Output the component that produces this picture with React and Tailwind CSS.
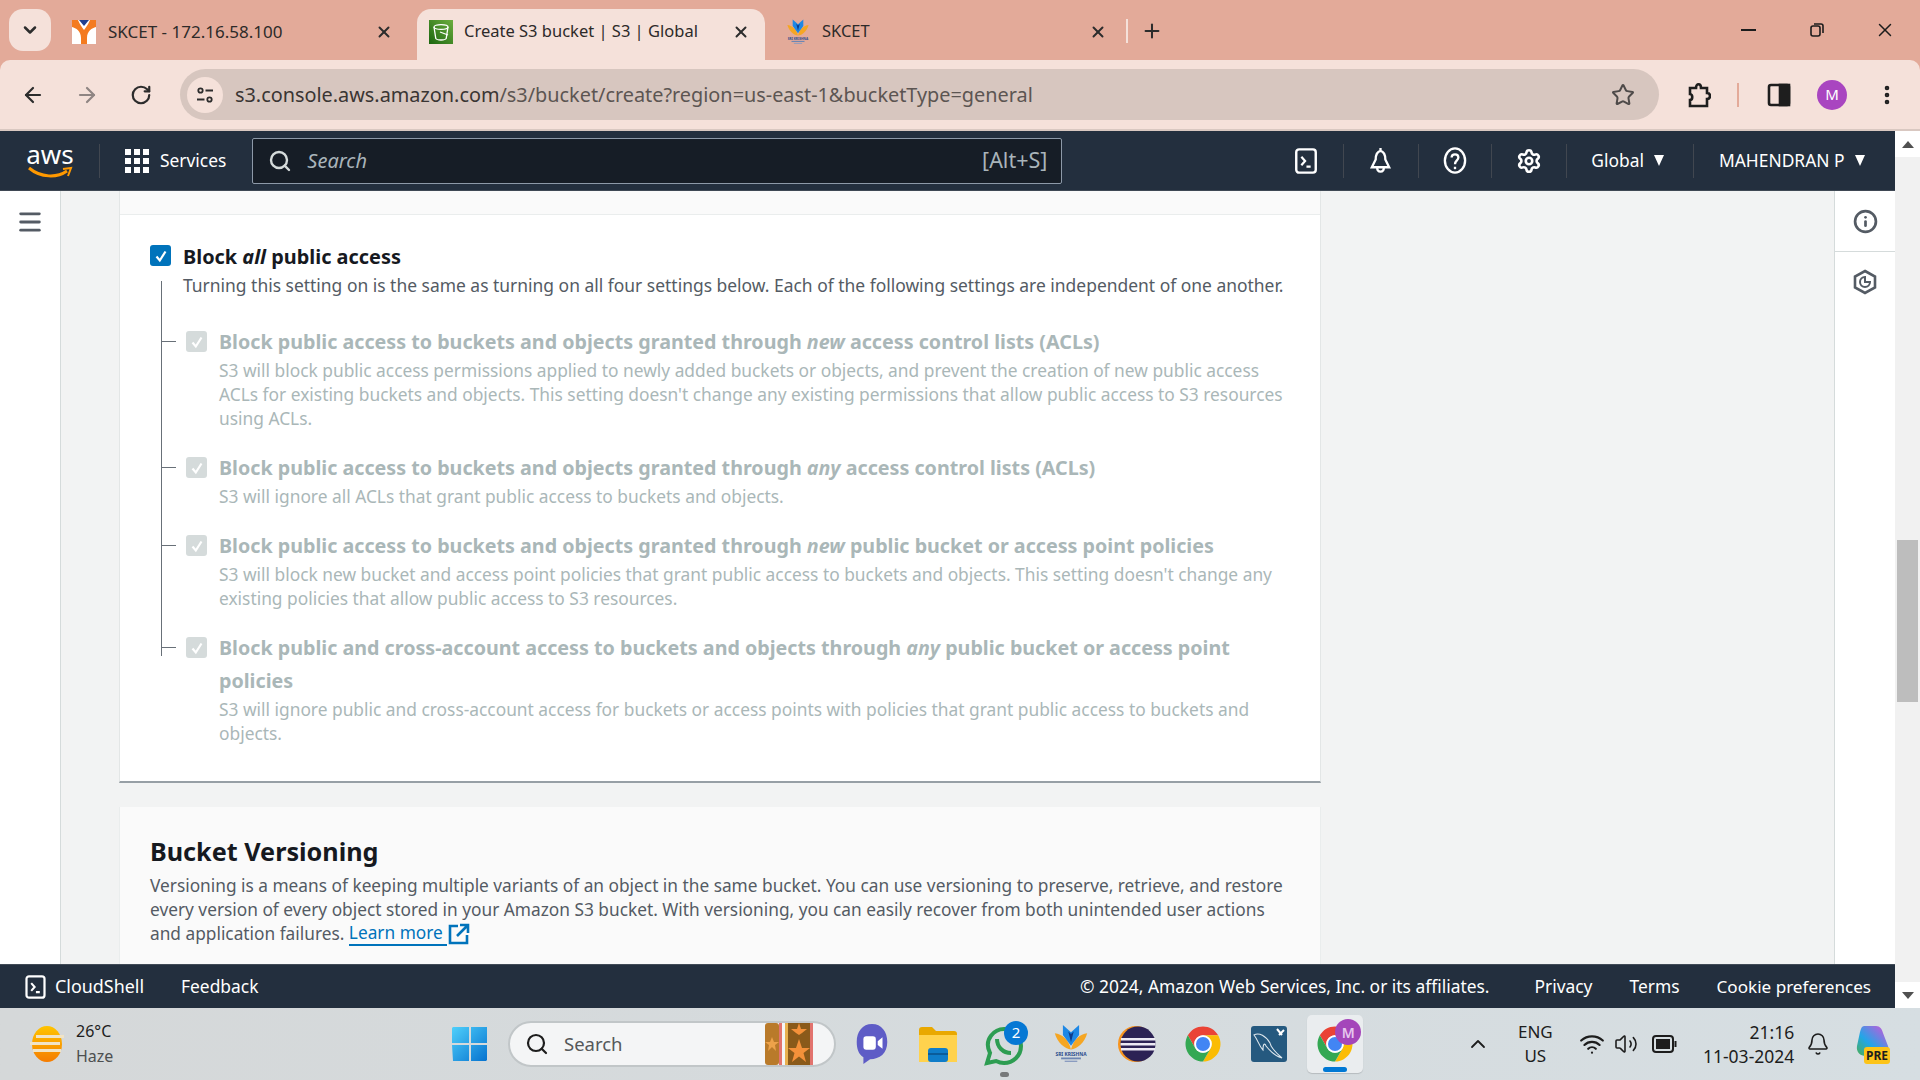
import React from "react";
import { ArrowLeft, ArrowRight, RotateCw, Star, Search, Bell, Settings, X, Plus, Menu, ChevronDown, ChevronUp, EllipsisVertical, Info, Wifi, Volume2 } from "lucide-react";

const ITEMS = [
    {
        title: ["Block public access to buckets and objects granted through ", "new", " access control lists (ACLs)"],
        desc: ["S3 will block public access permissions applied to newly added buckets or objects, and prevent the creation of new public access", "ACLs for existing buckets and objects. This setting doesn't change any existing permissions that allow public access to S3 resources", "using ACLs."],
    },
    {
        title: ["Block public access to buckets and objects granted through ", "any", " access control lists (ACLs)"],
        desc: ["S3 will ignore all ACLs that grant public access to buckets and objects."],
    },
    {
        title: ["Block public access to buckets and objects granted through ", "new", " public bucket or access point policies"],
        desc: ["S3 will block new bucket and access point policies that grant public access to buckets and objects. This setting doesn't change any", "existing policies that allow public access to S3 resources."],
    },
    {
        title: ["Block public and cross-account access to buckets and objects through ", "any", " public bucket or access point policies"],
        desc: ["S3 will ignore public and cross-account access for buckets or access points with policies that grant public access to buckets and", "objects."],
    },
];

const CheckBox = ({ disabled }) => (
    <div className={`flex h-[21px] w-[21px] shrink-0 items-center justify-center rounded-[3px] ${disabled ? "bg-[#d5dbdb]" : "bg-[#0073bb]"}`}>
        <svg viewBox="0 0 16 16" className="h-[16px] w-[16px]" fill="none" stroke="white" strokeWidth="2.2"><path d="M3.5 8.5 6.8 12.5 12.5 3.5" /></svg>
    </div>
);

const TerminalIcon = ({ className }) => (
    <svg viewBox="0 0 24 28" className={className} fill="none" stroke="white">
        <rect x="1.5" y="1.5" width="21" height="25" rx="3" strokeWidth="2.6" />
        <path d="M7 9.5 11 14 7 18.5M12.5 20H17" strokeWidth="2.4" />
    </svg>
);

const Caret = () => <div className="ml-[10px] h-0 w-0 border-x-[5px] border-t-[11px] border-x-transparent border-t-white" />;

const ChromeLogo = ({ className }) => (
    <svg viewBox="0 0 48 48" className={className}>
        <path fill="#ea4335" d="M24 14H41.32A20 20 0 0 0 6.68 14L15.34 29A10 10 0 0 1 24 14Z" />
        <path fill="#fbbc04" d="M41.32 14H24A10 10 0 0 1 32.66 29L24 44A20 20 0 0 0 41.32 14Z" />
        <path fill="#34a853" d="M6.68 14 15.34 29A10 10 0 0 0 32.66 29L24 44A20 20 0 0 1 6.68 14Z" />
        <circle cx="24" cy="24" r="10" fill="white" />
        <circle cx="24" cy="24" r="8" fill="#4285f4" />
    </svg>
);

const SkiLogo = ({ className, text }) => (
    <svg viewBox="0 0 40 44" className={className}>
        <path fill="#f5a623" d="M2 10C10 11 17 16 20 28 13 27 5 21 2 10Z" />
        <path fill="#f5a623" d="M38 10C30 11 23 16 20 28 27 27 35 21 38 10Z" />
        <path fill="#1e88e5" d="M11 1 20 9 29 1 29 12 20 24 11 12Z" />
        <path fill="#0d3c8c" d="M17 8 20 11 23 8 20 20Z" />
        {text && <text x="20" y="35" textAnchor="middle" fontSize="5.4" fontWeight="700" fill="#2a4b8d">SRI KRISHNA</text>}
        {text && <rect x="9" y="37" width="22" height="2" fill="#6d86b3" />}
        {text && <rect x="13" y="40.5" width="14" height="1.5" fill="#8a9cc0" />}
    </svg>
);

function TabStrip() {
    return (
        <div className="flex h-[60px] items-end bg-[#e3aa99] text-[16.5px] text-[#2d2a29]">
            <div className="mb-[9px] ml-[9px] flex h-[42px] w-[42px] items-center justify-center rounded-[14px] bg-[#f5e1da]">
                <ChevronDown size={20} strokeWidth={3} className="text-[#2c2c2c]" />
            </div>
            <div className="flex h-[51px] w-[366px] items-center pl-[21px] pb-[6px]">
                <svg viewBox="0 0 24 24" className="h-[24px] w-[24px] shrink-0">
                    <rect width="24" height="24" fill="white" />
                    <path fill="#f47b20" d="M0 0H6C8 5 10 7 12 10 14 7 16 5 18 0H24V7C20 8 15 11 15 18V24H9V18C9 11 4 8 0 7Z" />
                    <path fill="#1f3f8f" d="M7 0H17L12 6Z" />
                </svg>
                <span className="ml-[12px] w-[267px] text-[17px]">SKCET - 172.16.58.100</span>
                <X size={18} strokeWidth={2.6} className="text-[#2c2c2c]" />
            </div>
            <div className="flex h-[51px] w-[348px] items-center rounded-t-[14px] bg-[#f5e1da] pb-[6px] pl-[12px]">
                <svg viewBox="0 0 24 24" className="h-[24px] w-[24px] shrink-0">
                    <defs><linearGradient id="s3g" x1="0" y1="1" x2="1" y2="0"><stop offset="0" stopColor="#1b660f" /><stop offset="1" stopColor="#6cae3e" /></linearGradient></defs>
                    <rect width="24" height="24" fill="url(#s3g)" />
                    <g fill="none" stroke="white" strokeWidth="1.3"><ellipse cx="12" cy="7" rx="7" ry="2.4" /><path d="M5 7 6.8 18.5C8 20.5 16 20.5 17.2 18.5L19 7" /><path d="M11 12 19 15" /></g>
                </svg>
                <span className="ml-[11px] w-[268px]">Create S3 bucket | S3 | Global</span>
                <X size={18} strokeWidth={2.6} className="text-[#2c2c2c]" />
            </div>
            <div className="flex h-[51px] w-[361px] items-center pb-[6px] pl-[21px]">
                <SkiLogo className="h-[26px] w-[24px] shrink-0" text />
                <span className="ml-[12px] w-[267px]">SKCET</span>
                <X size={18} strokeWidth={2.6} className="text-[#2c2c2c]" />
            </div>
            <div className="mb-[17px] h-[24px] w-[2px] bg-[#f5e1da]" />
            <Plus size={22} strokeWidth={2.2} className="mb-[18px] ml-[13px] text-[#2c2c2c]" />
            <div className="mb-[19px] ml-auto flex items-center text-[#1c1c1c]">
                <div className="h-[2px] w-[15px] bg-[#1c1c1c]" />
                <svg viewBox="0 0 16 16" className="ml-[53px] h-[16px] w-[16px]" fill="none" stroke="#1c1c1c" strokeWidth="1.6"><rect x="2" y="4" width="9" height="10" rx="2" /><path d="M5 2H12C13.5 2 14 2.5 14 4V11" /></svg>
                <X size={22} strokeWidth={1.6} className="ml-[49px] mr-[24px]" />
            </div>
        </div>
    );
}

function Toolbar() {
    return (
        <div className="flex h-[71px] items-center rounded-t-[10px] border-b-[2px] border-[#d9c8c1] bg-[#f5e1da]">
            <ArrowLeft size={24} strokeWidth={2.2} className="ml-[21px] text-[#2c2c2c]" />
            <ArrowRight size={24} strokeWidth={2.2} className="ml-[30px] text-[#8f8583]" />
            <RotateCw size={22} strokeWidth={2.4} className="ml-[31px] text-[#2c2c2c]" />
            <div className="ml-[28px] flex h-[51px] w-[1479px] items-center rounded-full bg-[#d7c6bf] pl-[7px]">
                <div className="flex h-[36px] w-[36px] items-center justify-center rounded-full bg-[#f5e1da]">
                    <svg viewBox="0 0 20 20" className="h-[20px] w-[20px]" fill="none" stroke="#2c2c2c" strokeWidth="1.8"><circle cx="5.5" cy="5.5" r="2.2" /><path d="M10.5 5.5H18M2 14.5H9.5" /><circle cx="14.5" cy="14.5" r="2.2" /></svg>
                </div>
                <span className="ml-[12px] text-[19.85px] text-[#3a3533]">s3.console.aws.amazon.com<span className="text-[#5c5552]">/s3/bucket/create?region=us-east-1&amp;bucketType=general</span></span>
                <Star size={24} strokeWidth={2} className="ml-auto mr-[24px] text-[#4e4a49]" />
            </div>
            <svg viewBox="0 0 24 28" className="ml-[28px] h-[28px] w-[24px]" fill="none" stroke="#1e1e1e" strokeWidth="2.6"><path d="M3 7H9C9 2 14 2 14 7H20V12C24 12 24 18 20 18V25H3V19C6 19 6 13 3 13Z" /></svg>
            <div className="ml-[26px] h-[24px] w-[2px] bg-[#e3aa99]" />
            <svg viewBox="0 0 24 24" className="ml-[28px] h-[24px] w-[24px]" fill="none" stroke="#1e1e1e" strokeWidth="2.6"><rect x="2" y="2" width="20" height="20" rx="2" /><rect x="13" y="2" width="9" height="20" fill="#1e1e1e" /></svg>
            <div className="ml-[26px] flex h-[30px] w-[30px] items-center justify-center rounded-full bg-[#a945c0] text-[15px] text-white">M</div>
            <EllipsisVertical size={24} strokeWidth={2.6} className="ml-[28px] text-[#1e1e1e]" />
        </div>
    );
}

function NavBar() {
    const Sep = () => <div className="h-[34px] w-px bg-[#414750]" />;
    return (
        <div className="flex h-[60px] shrink-0 items-center border-b border-[#3f4854] bg-[#232f3e] text-[17.4px] text-white">
            <div className="ml-[27px] flex h-[38px] w-[46px] flex-col items-center">
                <span className="text-[26px] leading-[24px]">aws</span>
                <svg viewBox="0 0 46 14" className="h-[14px] w-[46px]" fill="none" stroke="#ff9900" strokeWidth="3"><path d="M2 2C14 12 30 12 40 5" /><path d="M36 3 44 2 41 10" strokeWidth="2" /></svg>
            </div>
            <div className="ml-[26px]"><Sep /></div>
            <div className="ml-[25px] grid grid-cols-3 gap-[3px]">
                {Array.from({ length: 9 }).map((_, i) => <div key={i} className="h-[6px] w-[6px] bg-white" />)}
            </div>
            <span className="ml-[11px]">Services</span>
            <div className="ml-[26px] flex h-[46px] w-[810px] items-center rounded-[2px] border border-[#8d99a8] bg-[#161d26] pr-[14px] pl-[15px] text-[#a9b4ba]">
                <Search size={24} strokeWidth={2.4} className="mt-[1px] text-[#d5dbdb]" />
                <span className="ml-[15px] text-[20px] italic">Search</span>
                <span className="ml-auto text-[21.5px]">[Alt+S]</span>
            </div>
            <TerminalIcon className="ml-[232px] h-[26px] w-[24px]" />
            <div className="ml-[25px]"><Sep /></div>
            <svg viewBox="0 0 24 28" className="ml-[24px] h-[27px] w-[25px]" fill="none" stroke="white" strokeWidth="2.4"><path d="M12 1V4C8 5 7 9 7 13L3 21H21L17 13C17 9 16 5 12 4M8.500 21C8.500 27 15.500 27 15.500 21" /></svg>
            <div className="ml-[25px]"><Sep /></div>
            <svg viewBox="0 0 24 28" className="ml-[24px] h-[27px] w-[24px]" fill="none" stroke="white" strokeWidth="2.4"><ellipse cx="12" cy="14" rx="10.5" ry="12.5" /><path d="M8.5 11C8.5 6.5 15.5 6.5 15.5 11 15.5 14 12 14 12 18" /><path d="M12 20.5V23" /></svg>
            <div className="ml-[24px]"><Sep /></div>
            <Settings size={26} strokeWidth={2.4} className="ml-[24px]" />
            <div className="ml-[24px]"><Sep /></div>
            <span className="ml-[24px]">Global</span>
            <Caret />
            <div className="ml-[29px]"><Sep /></div>
            <span className="ml-[25px]">MAHENDRAN P</span>
            <Caret />
        </div>
    );
}

const Row = ({ item }) => (
    <div className="relative mb-[22px] flex gap-[12px] pl-[36px]">
        <div className="absolute top-[15px] left-[11px] h-px w-[15px] bg-[#687078]" />
        <div className="pt-[5px]"><CheckBox disabled /></div>
        <div className="text-[#aab7b8]">
            <div className="-mt-[1px] w-[1040px] text-[19.7px] leading-[33px] font-bold">{item.title[0]}<i>{item.title[1]}</i>{item.title[2]}</div>
            {item.desc.map((line, i) => <div key={i} className="text-[17.35px] leading-[24px]">{line}</div>)}
        </div>
    </div>
);

function Content() {
    return (
        <div className="flex min-h-0 flex-1 overflow-hidden bg-[#f2f3f3]">
            <div className="flex w-[61px] shrink-0 justify-center border-r border-[#d5dbdb] bg-white pt-[17px]">
                <Menu size={28} strokeWidth={2.4} className="text-[#545b64]" />
            </div>
            <div className="ml-[58px] w-[1202px] shrink-0">
                <div className="border-x border-b-[2px] border-x-[#e3e6e6] border-b-[#979fa5] bg-white pb-[14px]">
                    <div className="h-[24px] border-b border-[#eaeded] bg-[#fafafa]" />
                    <div className="pt-[30px] pl-[30px]">
                        <div className="flex gap-[12px] text-[19.9px] leading-[24px] font-bold text-[#16191f]">
                            <CheckBox />
                            <span>Block <i>all</i> public access</span>
                        </div>
                        <div className="mt-[4px] pl-[33px] text-[17.45px] leading-[24px] text-[#545b64]">Turning this setting on is the same as turning on all four settings below. Each of the following settings are independent of one another.</div>
                        <div className="relative mt-[29px]">
                            <div className="absolute -top-[45px] left-[11px] h-[375px] w-px bg-[#687078]" />
                            {ITEMS.map((item, i) => <Row key={i} item={item} />)}
                        </div>
                    </div>
                </div>
                <div className="mt-[24px] border-x border-[#eaeded] bg-[#fafafa] px-[30px] pt-[27px] pb-[40px]">
                    <div className="text-[25.2px] leading-[34px] font-bold text-[#16191f]">Bucket Versioning</div>
                    <div className="mt-[6px] text-[17.3px] leading-[24px] text-[#545b64]">
                        <div>Versioning is a means of keeping multiple variants of an object in the same bucket. You can use versioning to preserve, retrieve, and restore</div>
                        <div>every version of every object stored in your Amazon S3 bucket. With versioning, you can easily recover from both unintended user actions</div>
                        <div className="flex items-center">and application failures.&nbsp;
                            <span className="border-b-[2px] border-[#0073bb] pr-[4px] leading-[22px] text-[#0073bb]">Learn more</span>
                            <svg viewBox="0 0 22 22" className="ml-[1px] h-[22px] w-[22px]" fill="none" stroke="#0073bb" strokeWidth="2.6"><path d="M10 3H2V20H19V12" /><path d="M9 13 19 3M12 2H20V10" /></svg>
                        </div>
                    </div>
                </div>
            </div>
            <div className="ml-auto flex w-[61px] shrink-0 flex-col items-center border-l border-[#d5dbdb] bg-white">
                <div className="flex h-[61px] w-full items-center justify-center border-b border-[#d5dbdb]">
                    <Info size={25} strokeWidth={2.6} className="text-[#545b64]" />
                </div>
                <svg viewBox="0 0 24 26" className="mt-[17px] h-[26px] w-[24px]" fill="none" stroke="#545b64" strokeWidth="2.6"><path d="M12 2 22 7.5V18.5L12 24 2 18.5V7.5Z" /><path d="M12 8A5 5 0 1 0 17 13H12Z" strokeWidth="2" /></svg>
            </div>
        </div>
    );
}

function Footer() {
    return (
        <div className="flex h-[44px] shrink-0 items-center border-t border-[#414b57] bg-[#232f3e] text-[17.4px] text-white">
            <TerminalIcon className="ml-[24px] h-[24px] w-[23px]" />
            <span className="ml-[8px] text-[17.9px]">CloudShell</span>
            <span className="ml-[37px]">Feedback</span>
            <span className="ml-auto">© 2024, Amazon Web Services, Inc. or its affiliates.</span>
            <span className="ml-[45px]">Privacy</span>
            <span className="ml-[37px]">Terms</span>
            <span className="ml-[37px] mr-[24px] text-[17.1px]">Cookie preferences</span>
        </div>
    );
}

function ScrollBar() {
    return (
        <div className="flex w-[25px] shrink-0 flex-col items-center bg-[#f1f1f1]">
            <div className="flex h-[26px] w-full items-center justify-center bg-white"><div className="h-0 w-0 border-x-[6px] border-b-[7px] border-x-transparent border-b-[#505050]" /></div>
            <div className="mt-[383px] h-[162px] w-[21px] bg-[#bdbdbd]" />
            <div className="mt-auto flex h-[26px] w-full items-center justify-center bg-white"><div className="h-0 w-0 border-x-[6px] border-t-[7px] border-x-transparent border-t-[#505050]" /></div>
        </div>
    );
}

function TaskBar() {
    const Slot = ({ children, className = "" }) => <div className={`relative flex h-[72px] w-[66.2px] shrink-0 items-center justify-center ${className}`}>{children}</div>;
    return (
        <div className="flex h-[72px] items-center bg-[#d6dbdd] bg-gradient-to-r from-[#d5d8d9] to-[#d6dee2] text-[#1d1d1d]">
            <div className="flex w-[452px] shrink-0 items-center pl-[30px]">
                <svg viewBox="0 0 34 36" className="h-[36px] w-[34px]">
                    <defs><linearGradient id="sun" x1="0" y1="0" x2="0" y2="1"><stop offset="0" stopColor="#ffc400" /><stop offset="1" stopColor="#f57c00" /></linearGradient></defs>
                    <ellipse cx="17" cy="18" rx="15" ry="18" fill="url(#sun)" />
                    <g fill="#f1e4c6"><rect x="6" y="9" width="28" height="3" /><rect x="0" y="16" width="30" height="3" /><rect x="3" y="23" width="28" height="3" /></g>
                </svg>
                <div className="ml-[12px] text-[16px] leading-[25px]"><div>26°C</div><div className="text-[#4d4f50]">Haze</div></div>
            </div>
            <svg viewBox="0 0 36 36" className="h-[36px] w-[36px] shrink-0">
                <defs><linearGradient id="win" x1="0" y1="0" x2="1" y2="1"><stop offset="0" stopColor="#4fd0fb" /><stop offset="1" stopColor="#0672cf" /></linearGradient></defs>
                <path fill="url(#win)" d="M1 1H17V17H0V2ZM19 1H35V17H19ZM0 19H17V35H1ZM19 19H35V34L34 35H19Z" />
            </svg>
            <div className="ml-[20px] flex h-[46px] w-[328px] shrink-0 items-center rounded-full border-[2px] border-[#c1c6c8] bg-[#f4f5f6] pl-[15px]">
                <Search size={24} strokeWidth={2.2} className="text-[#1d1d1d]" />
                <span className="ml-[15px] text-[18.5px] text-[#55585a]">Search</span>
                <svg viewBox="0 0 50 42" className="ml-auto mr-[19px] h-[42px] w-[50px]">
                    <rect x="0" y="0" width="14" height="42" rx="3" fill="#b97a2a" />
                    <rect x="14" y="0" width="3" height="42" fill="#e2736e" />
                    <rect x="20" y="0" width="28" height="42" fill="#8a5a1a" />
                    <rect x="20" y="0" width="3" height="42" fill="#e8b04f" /><rect x="45" y="0" width="3" height="42" fill="#e2736e" />
                    <path fill="#f4913a" d="M34 16 37 25H45L38.500 30 41 39 34 33.500 27 39 29.500 30 23 25H31ZM34 0 36 6H42L37 10 34 12 31 10 26 6H32Z" />
                    <path fill="#eda24a" d="M7 14 9 19H14L10 22 11 28 7 24 3 28 4 22 0 19H5Z" />
                </svg>
            </div>
            <Slot className="ml-[3px]">
                <svg viewBox="0 0 36 44" className="h-[42px] w-[36px]">
                    <path fill="#5e5cc6" d="M18 1C28 1 34 9 34 20 34 32 26 38 16 38L9 43 9 36C4 33 2 27 2 20 2 9 8 1 18 1Z" />
                    <rect x="9" y="14" width="13" height="14" rx="3" fill="white" /><path fill="white" d="M24 19 29 15V27L24 23Z" />
                </svg>
            </Slot>
            <Slot>
                <svg viewBox="0 0 38 36" className="h-[36px] w-[38px]">
                    <path fill="#e9a800" d="M0 4C0 2 1 1 3 1H13L17 5H35C37 5 38 6 38 8V36H0Z" />
                    <path fill="#ffd24d" d="M0 9H38V36H0Z" />
                    <rect x="9" y="22" width="20" height="14" rx="3" fill="#0f7dc9" /><rect x="9" y="27" width="20" height="2" fill="#0a5c9a" />
                </svg>
            </Slot>
            <Slot>
                <svg viewBox="0 0 46 46" className="ml-[4px] h-[46px] w-[46px]">
                    <path fill="none" stroke="#2d9d52" strokeWidth="4" d="M4 42 7 32C0 18 12 8 21 8 31 8 38 16 38 25 38 35 30 42 21 42 18 42 15 41 13 40Z" />
                    <path fill="none" stroke="#2d9d52" strokeWidth="4" d="M14 18C14 26 20 32 28 32" />
                    <circle cx="33" cy="12" r="12" fill="#0678d4" />
                    <text x="33" y="17" textAnchor="middle" fontSize="15" fontFamily="Noto Sans, sans-serif" fill="white">2</text>
                </svg>
                <div className="absolute bottom-[3px] h-[5px] w-[9px] rounded-full bg-[#77797a]" />
            </Slot>
            <Slot><SkiLogo className="h-[42px] w-[36px]" text /></Slot>
            <Slot>
                <svg viewBox="0 0 38 38" className="h-[38px] w-[38px]">
                    <circle cx="18" cy="19" r="18" fill="#f7941e" />
                    <circle cx="20" cy="19" r="17.500" fill="#2c2255" />
                    <g fill="#ece9f4"><rect x="3" y="13" width="34" height="2.500" /><rect x="2.500" y="18" width="35" height="2.500" /><rect x="3" y="23" width="34" height="2.500" /></g>
                </svg>
            </Slot>
            <Slot><ChromeLogo className="h-[42px] w-[42px]" /></Slot>
            <Slot>
                <svg viewBox="0 0 36 36" className="h-[36px] w-[36px]">
                    <rect width="36" height="36" rx="3" fill="#25597f" />
                    <path fill="none" stroke="#dfe8ee" strokeWidth="1.100" d="M3 9C8 6 15 10 19 17 20 22 24 26 31 32 24 30 19 25 15 20 14 17 12 17 12 24 8 20 7 14 3 9Z" />
                    <path fill="none" stroke="white" strokeWidth="2" d="M26 3 31 9M28 9 33 4" />
                </svg>
            </Slot>
            <div className="relative ml-[5px] flex h-[58px] w-[56px] shrink-0 items-center justify-center rounded-[5px] bg-[#eaedef] shadow-[0_1px_1px_rgba(0,0,0,0.15)]">
                <ChromeLogo className="h-[42px] w-[42px]" />
                <div className="absolute top-[4px] right-[2px] flex h-[26px] w-[26px] items-center justify-center rounded-full bg-[#a446ba] text-[14px] font-semibold text-[#e7c7ee]">M</div>
                <div className="absolute bottom-[1px] h-[5px] w-[24px] rounded-full bg-[#0078d4]" />
            </div>
            <ChevronUp size={24} strokeWidth={1.8} className="ml-[103px]" />
            <div className="ml-[23px] w-[44px] text-center text-[17px] leading-[24px]"><div>ENG</div><div>US</div></div>
            <Wifi size={26} strokeWidth={2} className="ml-[22px]" />
            <Volume2 size={24} strokeWidth={1.6} className="ml-[9px]" />
            <svg viewBox="0 0 26 18" className="ml-[14px] h-[18px] w-[26px]" fill="none" stroke="#1d1d1d" strokeWidth="2"><rect x="1" y="1" width="20" height="16" rx="3" /><rect x="4" y="4" width="14" height="10" fill="#1d1d1d" stroke="none" /><path d="M23.500 6V12" /></svg>
            <div className="ml-[10px] w-[106px] text-right text-[17.5px] leading-[24px]"><div>21:16</div><div>11-03-2024</div></div>
            <Bell size={24} strokeWidth={1.6} className="ml-[12px]" />
            <svg viewBox="0 0 36 40" className="ml-[24px] h-[40px] w-[36px]">
                <defs><linearGradient id="cop" x1="0" y1="1" x2="1" y2="0"><stop offset="0" stopColor="#4caf50" /><stop offset="0.4" stopColor="#22a6e8" /><stop offset="1" stopColor="#d94fd8" /></linearGradient></defs>
                <path fill="url(#cop)" d="M10 2H22C26 2 28 5 29 9L34 22C36 28 33 32 28 32H12C6 32 2 28 3 22L6 8C7 4 8 2 10 2Z" />
                <rect x="10" y="23" width="26" height="17" rx="3" fill="#fcc419" />
                <text x="23" y="36" textAnchor="middle" fontSize="12" fontWeight="700" fontFamily="Noto Sans, sans-serif" fill="#1d1d1d">PRE</text>
            </svg>
        </div>
    );
}

export default function App() {
    return (
        <div className="flex h-[1080px] w-[1920px] flex-col overflow-hidden bg-[#e3aa99] font-['Noto_Sans',sans-serif]">
            <TabStrip />
            <Toolbar />
            <div className="flex min-h-0 flex-1">
                <div className="flex min-w-0 flex-1 flex-col">
                    <NavBar />
                    <Content />
                    <Footer />
                </div>
                <ScrollBar />
            </div>
            <TaskBar />
        </div>
    );
}
